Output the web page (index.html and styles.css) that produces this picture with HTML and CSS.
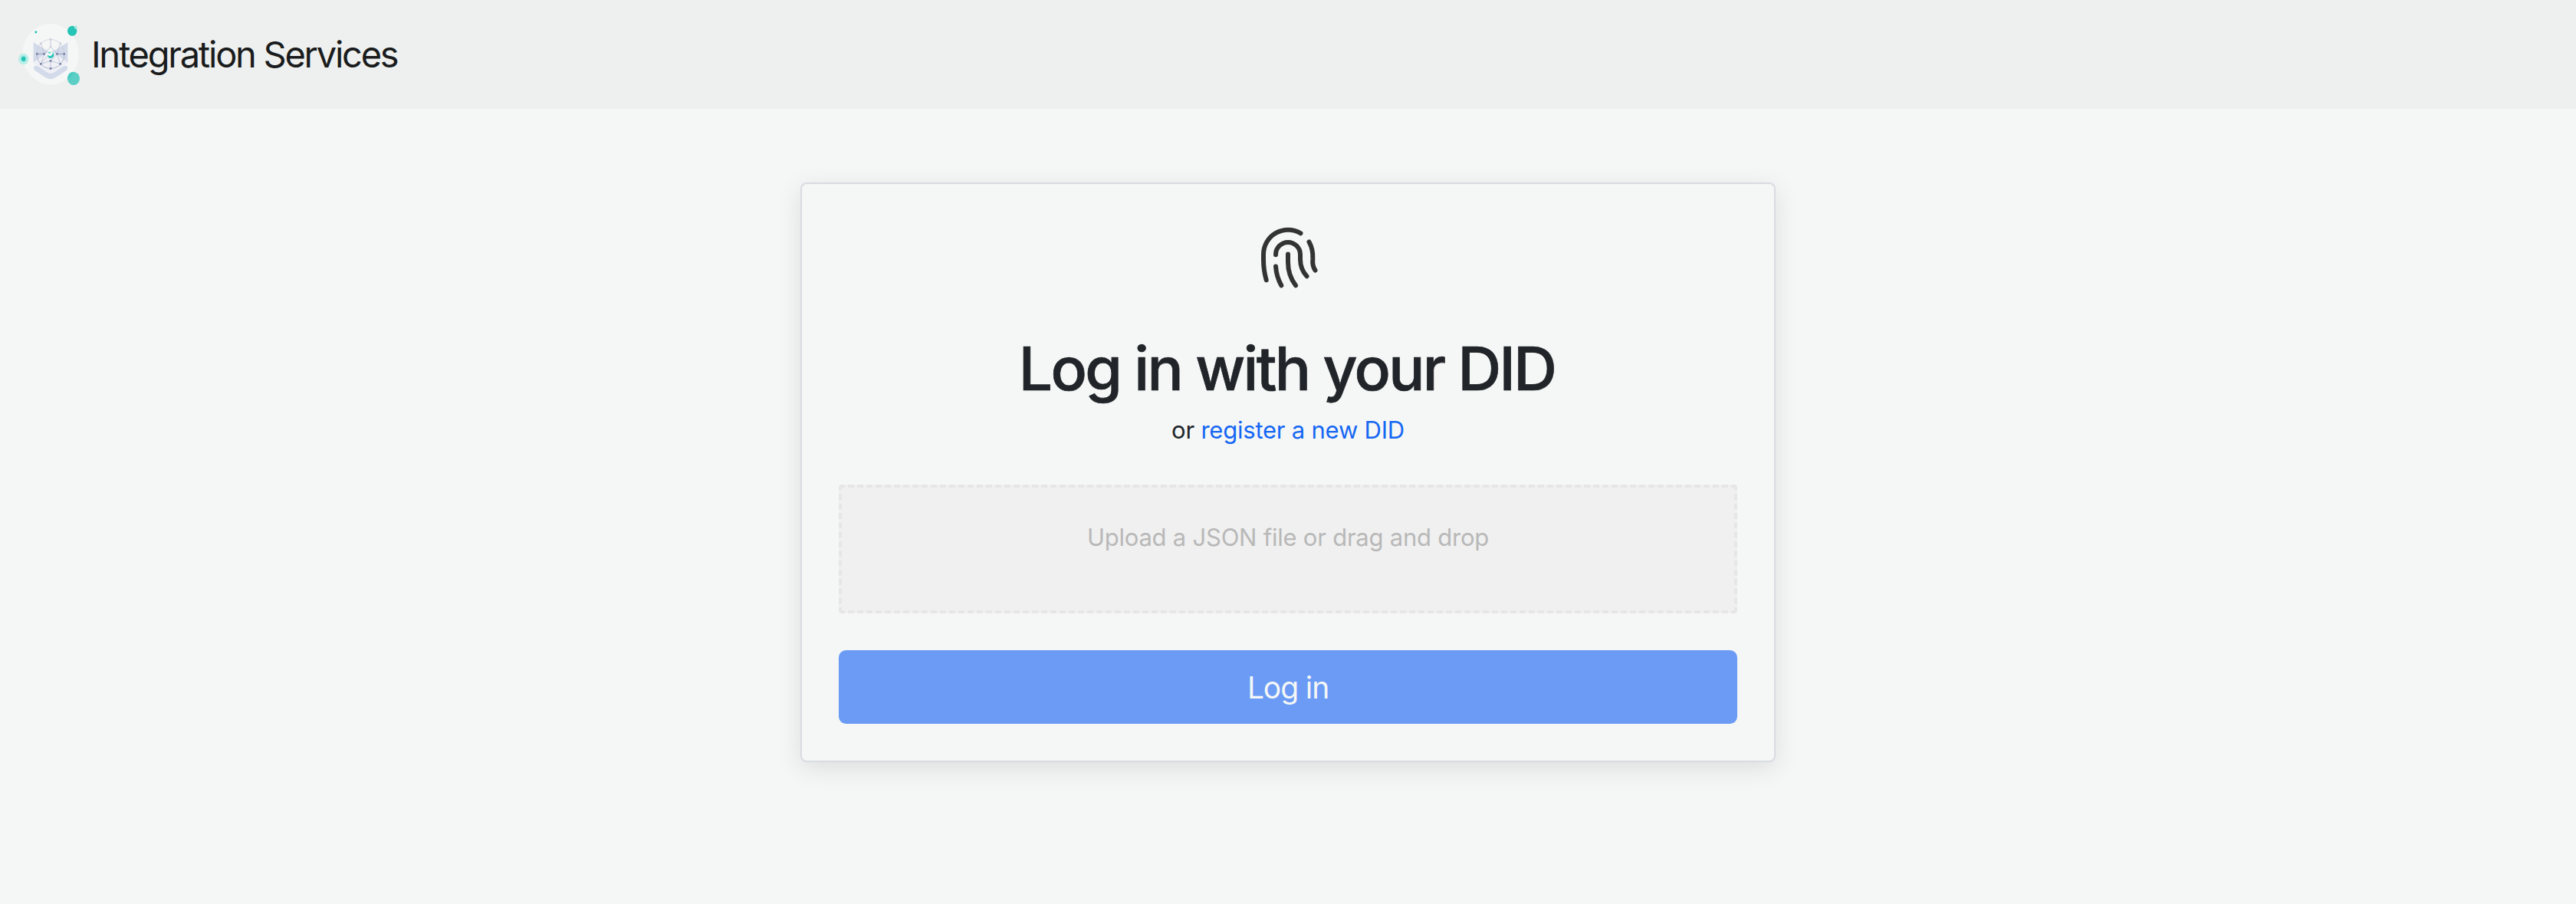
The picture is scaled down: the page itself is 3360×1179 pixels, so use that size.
FILE: index.html
```html
<!DOCTYPE html>
<html lang="en">
<head>
<meta charset="utf-8">
<title>Integration Services</title>
<link rel="stylesheet" href="styles.css">
</head>
<body>
<header class="navbar">
  <svg class="logo" viewBox="21 27 252 252" aria-hidden="true">
    <ellipse cx="153" cy="152" rx="110" ry="119" fill="#f5f7f6"/>
    <path d="M86 106 153 146 220 106V188L153 228 86 188Z" fill="#eff0f6"/>
    <path d="M86 106 145 142 86 184ZM220 106 161 142 220 184Z" fill="#d3daea"/>
    <path d="M88 201Q95 194 105 200L140 223Q153 231 166 223L201 200Q211 194 218 201Q222 209 213 217L172 244Q153 255 134 244L93 217Q84 209 88 201Z" fill="#d3daea"/>
    <g fill="none" stroke="#aeb4c9" stroke-width="2">
      <ellipse cx="153" cy="151" rx="54" ry="57" stroke="#c4c8d7"/>
      <path d="M99 151A54 57 0 0 0 207 151M99 151H128L153 123 178 151H207M128 151 115 190 153 178 191 190 178 151M128 151 115 110M178 151 191 110M153 94V123M153 178V208M115 190 140 160M153 178 178 151"/>
    </g>
    <path d="M99 148h6M128 151h-24M178 151h25" stroke="#8d96b5" stroke-width="2"/>
    <g fill="#cfd1dd"><path d="M149 90h8v8h-8zM111 106h8v8h-8zM187 106h8v8h-8zM149 119h8v8h-8z"/></g>
    <g fill="#7f89aa"><path d="M96 147h8v8h-8zM124 147h8v8h-8zM174 147h8v8h-8zM202 147h8v8h-8zM111 186h8v8h-8zM187 186h8v8h-8zM149 174h8v8h-8zM149 204h8v8h-8z"/></g>
    <ellipse cx="153" cy="152" rx="13" ry="15" fill="#f7f9fa"/>
    <path d="M141 155Q141 167 153 168Q167 167 166 151L163 145Q157 161 150 159Q145 157 141 155Z" fill="#2bc4b6"/>
    <path d="M144 143h8l1 5-5 2-5-3z" fill="#5ed3c8"/>
    <path d="M151 148 162 139" stroke="#9be3dc" stroke-width="3"/>
    <ellipse cx="95.500" cy="65.500" rx="4.500" ry="5" fill="#24c4b5"/>
    <ellipse cx="237.500" cy="61" rx="18.500" ry="19.500" fill="#25c4b6"/>
    <ellipse cx="252" cy="47" rx="6.500" ry="7" fill="#a9eae3" opacity=".8"/>
    <ellipse cx="47" cy="171" rx="20" ry="22" fill="#b7eee8"/>
    <ellipse cx="47" cy="170.500" rx="9" ry="10" fill="#27c5b7"/>
    <ellipse cx="243" cy="247" rx="24" ry="26" fill="#5bcfc6"/>
    <path d="M219 247A24 26 0 0 1 239 221.500L246 222Q236 242 221 253Z" fill="#4bcbc1"/>
  </svg>
  <span class="brand">Integration Services</span>
</header>
<main class="page">
  <section class="card">
    <svg class="fingerprint" viewBox="0 0 96 96" fill="none" stroke="#333" stroke-width="6" stroke-linecap="round" aria-hidden="true">
      <path d="M64.500 22.300A32 32 0 0 0 16 50V57Q16 70 19.700 83.300"/>
      <path d="M32 50.300V50A16 16 0 0 1 64 50V56Q64 69 72.500 78.300"/>
      <path d="M48 49.500V60Q48 77 58 90.300"/>
      <path d="M32 65.500Q33 79 39.300 90.300"/>
      <path d="M75.500 33.500Q81 43 80.300 56Q79.500 65 83.500 70.500"/>
    </svg>
    <h1 class="title">Log in with your DID</h1>
    <p class="subtitle">or <a class="link" href="#">register a new DID</a></p>
    <div class="dropzone">Upload a JSON file or drag and drop</div>
    <button class="submit" type="button">Log in</button>
  </section>
</main>
</body>
</html>
```
FILE: styles.css
```css
* { box-sizing: border-box; }
body { margin: 0; min-height: 1179px; background: #f5f7f6; color: #212529; font-family: Inter, "Liberation Sans", sans-serif; font-size: 32px; line-height: 48px; }
.navbar { display: flex; align-items: center; height: 142px; padding-left: 22px; background: #eef0ef; }
.logo { width: 84px; height: 84px; }
.brand { margin-left: 13px; font-size: 47px; letter-spacing: -2.250px; color: #191b1c; }
.page { display: flex; justify-content: center; padding-top: 96px; }
.card { display: flex; flex-direction: column; align-items: center; width: 1272px; height: 756px; padding: 42px 48px; border: 2px solid #d8dbe0; border-radius: 8px; background: #f5f7f6; box-shadow: 0 8px 32px rgba(0, 0, 0, .1); }
.fingerprint { width: 96px; height: 96px; }
.title { margin: 55px 0 0; padding-right: 3px; font-size: 78.500px; line-height: 96px; font-weight: 500; letter-spacing: -2.700px; -webkit-text-stroke: .7px; }
.subtitle { margin: 8px 0 0; font-size: 31px; letter-spacing: -.220px; }
.link { color: #1567f3; text-decoration: none; }
.dropzone { align-self: stretch; height: 168px; margin-top: 47px; padding-top: 41px; border: 4px dashed #e6e6e6; border-radius: 4px; background: #f0f0f0; color: #b8b8b8; font-size: 31px; letter-spacing: -.230px; text-align: center; }
.submit { align-self: stretch; height: 96px; margin-top: 48px; padding: 0; border: 0; border-radius: 9.600px; background: #6b9bf5; color: #f5f7f6; font: 39px Inter, sans-serif; letter-spacing: -1.100px; }
```
